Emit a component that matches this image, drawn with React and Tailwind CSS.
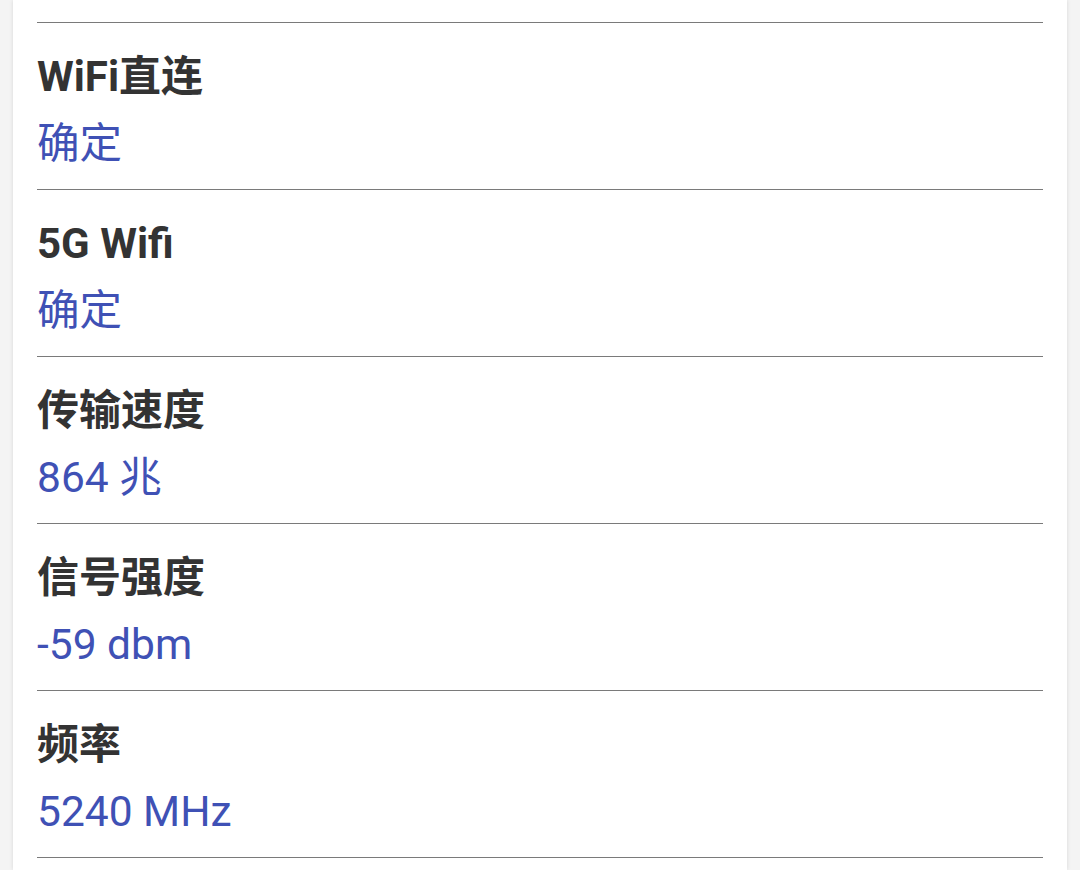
const rows = [
  { label: "WiFi直连", value: "确定" },
  { label: "5G Wifi", value: "确定" },
  { label: "传输速度", value: "864 兆" },
  { label: "信号强度", value: "-59 dbm" },
  { label: "频率", value: "5240 MHz" },
];

const font = { fontFamily: 'Roboto, "Noto Sans CJK SC", sans-serif' };

export default function App() {
  return (
    <div className="h-[870px] overflow-hidden bg-[#f4f4f4] px-[13px]" style={font}>
      <div className="h-full bg-white shadow-[0_0_4px_rgba(0,0,0,0.12)] px-[24px]">
        {/* tail of the row above, cut off by the screen */}
        <div className="h-[23px] border-b border-[#7a7a7a]" />

        {rows.map((row) => (
          <div
            key={row.label}
            className="h-[167px] border-b border-[#7a7a7a] pt-[25px] flex flex-col"
          >
            <div className="text-[42px] leading-[58px] font-bold text-[#333333]">
              {row.label}
            </div>
            <div className="mt-[9px] text-[42.5px] leading-[58px] text-[#3f51b5]">
              {row.value}
            </div>
          </div>
        ))}
      </div>
    </div>
  );
}
